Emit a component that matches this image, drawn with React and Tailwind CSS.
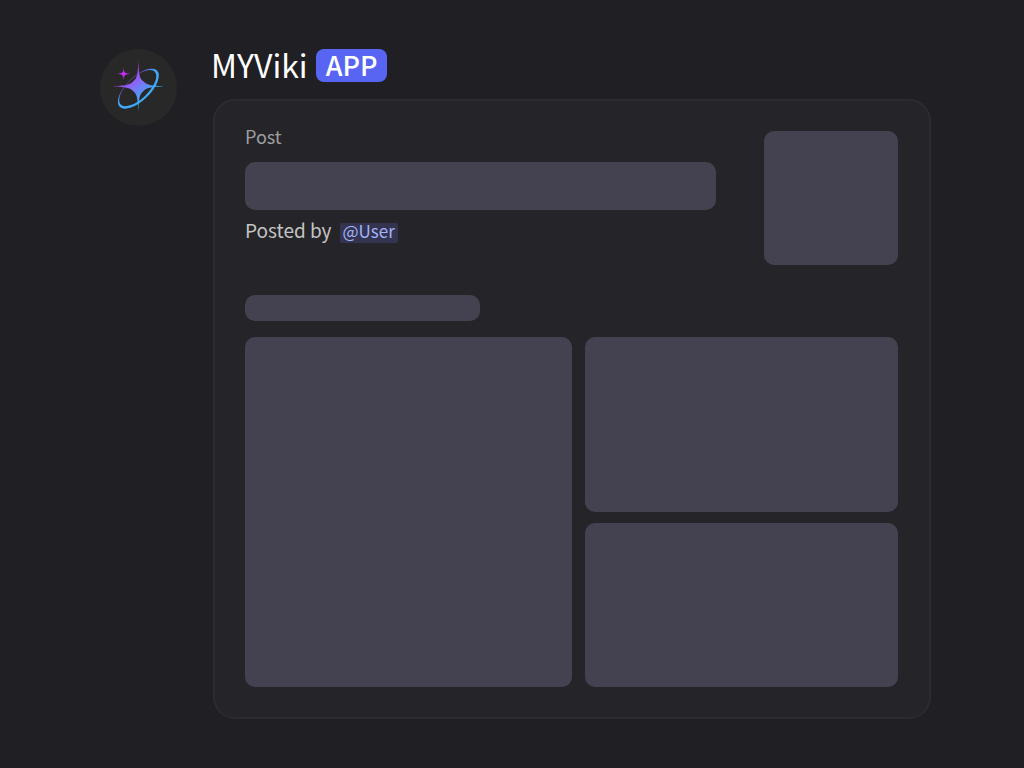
import React from "react";

function Placeholder({ className }) {
  return <div className={`bg-[#444250] rounded-[10px] ${className}`} />;
}

function Avatar() {
  return (
    <div className="shrink-0 w-[77px] h-[77px] rounded-full bg-[#282829]">
      <svg viewBox="15 15 231 231" className="w-full h-full" aria-hidden="true">
        <defs>
          <linearGradient
            id="star"
            gradientUnits="userSpaceOnUse"
            x1="100"
            y1="88"
            x2="154"
            y2="160"
          >
            <stop offset="0" stopColor="#b43af0" />
            <stop offset="0.5" stopColor="#7f72f8" />
            <stop offset="1" stopColor="#35adf5" />
          </linearGradient>
          <linearGradient
            id="orbit"
            gradientUnits="userSpaceOnUse"
            x1="130"
            y1="98"
            x2="130"
            y2="130"
          >
            <stop offset="0" stopColor="#7a4cc8" stopOpacity="0.7" />
            <stop offset="0.4" stopColor="#5a7ce8" />
            <stop offset="1" stopColor="#3fabf8" />
          </linearGradient>
        </defs>
        {/* Main star */}
        <path
          d="M130 51C132 98 135 103 145 112C154 121 160 125 206 127C160 130 154 133 145 142C135 151 132 157 130 204C128 157 125 151 115 142C106 133 100 130 54 127C100 125 106 121 115 112C125 103 128 98 130 51Z"
          fill="url(#star)"
        />
        {/* Orbit, thinner towards the upper left */}
        <g transform="rotate(-44 130 134)">
          <path
            fillRule="evenodd"
            fill="url(#orbit)"
            d="M52 134A78 36 0 1 1 208 134A78 36 0 1 1 52 134ZM59 131.5A71 32 0 1 0 201 131.5A71 32 0 1 0 59 131.5Z"
          />
        </g>
        {/* Small star */}
        <path
          d="M86 69C87 86 88 88 106 89C88 91 87 93 86 110C85 93 84 91 66 89C84 88 85 86 86 69Z"
          fill="#c22df0"
        />
      </svg>
    </div>
  );
}

function App() {
  return (
    <main className="min-h-screen bg-[#201f23] pt-[49px] pb-12 pl-[100px] pr-[93px] flex items-start gap-9 font-['Noto_Sans_CJK_SC',sans-serif]">
      <Avatar />

      <div className="flex-1 min-w-0">
        {/* Author */}
        <header className="flex items-start gap-2 h-[33px] -ml-1 pl-[2px]">
          <h1 className="text-[32px] leading-[31px] text-white">MYViki</h1>
          <span className="h-[33px] px-[10px] rounded-lg bg-[#5865f2] text-[27px] leading-[31px] font-medium text-white">
            APP
          </span>
        </header>

        {/* Embed */}
        <article className="mt-[17px] py-[30px] pl-[30px] pr-[31px] rounded-[22px] border-2 border-[#2c2b33] bg-[#252428]">
          <div className="flex justify-between gap-12">
            <div className="flex-1">
              <p className="-mt-1 text-[18px] leading-[18px] text-[#9f9f9f]">
                Post
              </p>
              <Placeholder className="mt-[17px] h-12" />
              <p className="mt-[9px] flex items-baseline gap-2 text-[19px] leading-[22px] text-[#c4c4c4]">
                Posted by
                <a
                  href="#user"
                  className="h-5 px-[3px] rounded-xs bg-[#343350] text-[17px] leading-4 text-[#a3b3f8]"
                >
                  @User
                </a>
              </p>
            </div>
            <Placeholder className="shrink-0 w-[134px] h-[134px]" />
          </div>

          <Placeholder className="mt-[30px] w-[36%] h-[26px]" />

          <div className="mt-4 h-[350px] grid grid-cols-[327fr_313fr] grid-rows-[175fr_164fr] gap-x-[13px] gap-y-[11px]">
            <Placeholder className="row-span-2" />
            <Placeholder />
            <Placeholder />
          </div>
        </article>
      </div>
    </main>
  );
}

export default App;
